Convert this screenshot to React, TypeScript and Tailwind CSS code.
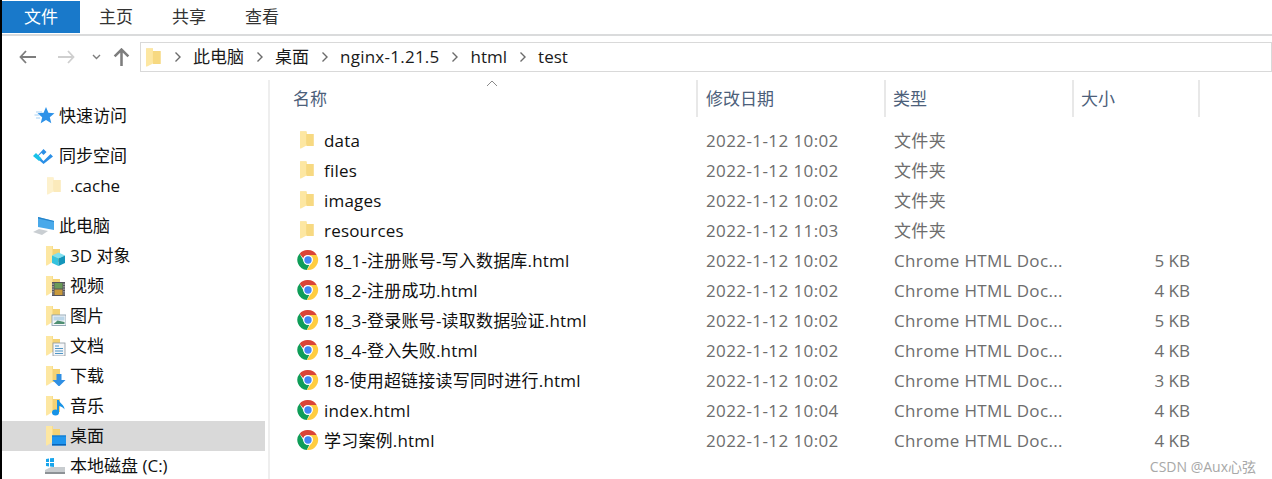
import React from "react";

const font = "font-['Open_Sans','Noto_Sans_CJK_SC',sans-serif]";

const Folder = ({ pale, big }: { pale?: boolean; big?: boolean }) => (
  <svg width={big ? 15 : 14} height={big ? 21 : 18} viewBox="0 0 14 18" className="shrink-0">
    <path d="M0 .5h6.500V3H13.500v12H7z" fill={pale ? "#f9e6b2" : "#f3d274"} />
    <path d="M0 .5h6.500V14.500L1 17.500H0z" fill={pale ? "#fdf1cd" : "#fde7a2"} />
    <path d="M6.500 3H13.500v12H6.500z" fill={pale ? "#fbeabb" : "#f7d981"} />
  </svg>
);

const Chrome = () => (
  <svg width="22" height="22" viewBox="0 0 48 48" className="mb-[2px] shrink-0">
    <path d="M24 2a22 22 0 0 1 19.050 11H24a11 11 0 0 0-10.300 7.200L5.600 10.100A22 22 0 0 1 24 2z" fill="#db4437" />
    <path d="M5.600 10.100 14.800 26A11 11 0 0 0 27 34.600L21.400 45.800A22 22 0 0 1 5.600 10.100z" fill="#0f9d58" />
    <path d="M43.050 13A22 22 0 0 1 21.400 45.800L32 29.500A11 11 0 0 0 33 17.500L24 13z" fill="#ffcd40" />
    <circle cx="24" cy="24" r="10.500" fill="#fff" />
    <circle cx="24" cy="24" r="8" fill="#4285f4" />
  </svg>
);

const LibFolder = ({ children }: { children?: React.ReactNode }) => (
  <svg width="20" height="20" viewBox="0 0 20 20" className="shrink-0">
    <path d="M0 0h7v3h7v13H2z" fill="#f3d274" />
    <path d="M0 0h6.500v16L1 19.500H0z" fill="#fde7a2" />
    {children}
  </svg>
);

const navIcons: Record<string, React.ReactNode> = {
  "3D 对象": (
    <g>
      <path d="M6 9.500l6.500-3 6.500 3-6.500 3z" fill="#7fe0f0" />
      <path d="M6 9.500l6.500 3V20L6 17z" fill="#35c3de" />
      <path d="M19 9.500l-6.500 3V20l6.500-3z" fill="#1496bb" />
    </g>
  ),
  视频: (
    <g>
      <rect x="6" y="6" width="13" height="14" fill="#55555d" />
      <rect x="8.500" y="7" width="8" height="5.500" fill="#6a9a58" />
      <rect x="8.500" y="13.500" width="8" height="5.500" fill="#c99a3c" />
      <path d="M7 7.500v11M18 7.500v11" stroke="#c9c9c9" strokeWidth="1" strokeDasharray="1.500 1" />
    </g>
  ),
  图片: (
    <g>
      <rect x="6" y="9" width="14" height="10.500" fill="#f4f6f8" stroke="#7f98a8" strokeWidth=".8" />
      <rect x="7.500" y="10.500" width="11" height="4" fill="#bcd6e8" />
      <path d="M7.500 18l4-3.500 7 1.500v2z" fill="#4f8f72" />
    </g>
  ),
  文档: (
    <g>
      <rect x="7" y="7" width="12" height="13" fill="#f4f6f8" stroke="#8c979f" strokeWidth=".8" />
      <path d="M9 10h4M9 12.500h8M9 15h8M9 17.500h8" stroke="#4f95c5" strokeWidth="1.100" />
    </g>
  ),
  下载: <path d="M10.500 8h5v6h4l-6.500 6.500L6.500 14h4z" fill="#2f8fe3" />,
  音乐: (
    <g fill="#1793e6">
      <ellipse cx="9.500" cy="16.500" rx="3.500" ry="3" />
      <path d="M11 4h2c.5 3.500 5.500 4.500 5.500 9.500-1-2-3-3-5.500-3.500v7h-2z" />
    </g>
  ),
  桌面: (
    <g>
      <rect x="6" y="9.500" width="14" height="10" fill="#1e95ee" />
      <rect x="6" y="18" width="14" height="1.500" fill="#0b63b5" />
      <path d="M6 9.500h14v1H6z" fill="#0f74c8" />
    </g>
  ),
};

const files = [
  { name: "data", date: "2022-1-12 10:02", type: "文件夹", size: "" },
  { name: "files", date: "2022-1-12 10:02", type: "文件夹", size: "" },
  { name: "images", date: "2022-1-12 10:02", type: "文件夹", size: "" },
  { name: "resources", date: "2022-1-12 11:03", type: "文件夹", size: "" },
  { name: "18_1-注册账号-写入数据库.html", date: "2022-1-12 10:02", type: "Chrome HTML Doc...", size: "5 KB" },
  { name: "18_2-注册成功.html", date: "2022-1-12 10:02", type: "Chrome HTML Doc...", size: "4 KB" },
  { name: "18_3-登录账号-读取数据验证.html", date: "2022-1-12 10:02", type: "Chrome HTML Doc...", size: "5 KB" },
  { name: "18_4-登入失败.html", date: "2022-1-12 10:02", type: "Chrome HTML Doc...", size: "4 KB" },
  { name: "18-使用超链接读写同时进行.html", date: "2022-1-12 10:02", type: "Chrome HTML Doc...", size: "3 KB" },
  { name: "index.html", date: "2022-1-12 10:04", type: "Chrome HTML Doc...", size: "4 KB" },
  { name: "学习案例.html", date: "2022-1-12 10:02", type: "Chrome HTML Doc...", size: "4 KB" },
];

const Crumb = ({ label, className }: { label: string; className?: string }) => (
  <>
    <svg width="8" height="12" viewBox="0 0 8 12" className="mx-[11.5px] shrink-0">
      <path d="M1.500 1.500 6 6l-4.500 4.500" fill="none" stroke="#6b6b6b" strokeWidth="1.400" />
    </svg>
    <span className={`text-[#1a1a1a] ${className ?? ""}`}>{label}</span>
  </>
);

const NavChild = ({ label, selected }: { label: string; selected?: boolean }) => (
  <div className={`flex h-[30px] items-center pl-[44px] ${selected ? "bg-[#d9d9d9]" : ""}`}>
    <LibFolder>{navIcons[label]}</LibFolder>
    <span className="ml-[4px] text-[#101010]">{label}</span>
  </div>
);

const NavHead = ({ icon, label, className }: { icon: React.ReactNode; label: string; className?: string }) => (
  <div className={`flex h-[30px] items-center pl-[31px] ${className ?? ""}`}>
    <span className="flex w-[26px] shrink-0 items-center">{icon}</span>
    <span className="text-[#101010]">{label}</span>
  </div>
);

const HeaderCell = ({ label, className }: { label: string; className: string }) => (
  <div className={`flex h-[37px] shrink-0 items-center border-r-2 border-[#e8e8e8] text-[#4c607a] ${className}`}>{label}</div>
);

export default function App() {
  return (
    <div className={`relative h-[479px] w-[1272px] overflow-hidden border-l-2 border-black bg-white text-[17px] ${font}`}>
      {/* ribbon tabs */}
      <div className="flex h-[36px] items-start border-b-2 border-[#dadbdc] pt-px">
        <div className="flex h-[32px] w-[78px] items-center justify-center bg-[#1979ca] text-white">文件</div>
        <div className="flex h-[32px] items-center gap-[39px] pl-[19px] text-[#333]">
          <span>主页</span>
          <span>共享</span>
          <span>查看</span>
        </div>
      </div>

      {/* address bar */}
      <div className="flex h-[44px] items-start pt-[6px]">
        <div className="flex h-[30px] w-[138px] shrink-0 items-center pl-[17px]">
          <svg width="17" height="14" viewBox="0 0 17 14">
            <path d="M7 1 1.500 7 7 13M2 7h15" fill="none" stroke="#7d7d7d" strokeWidth="1.800" />
          </svg>
          <svg width="17" height="14" viewBox="0 0 17 14" className="ml-[22px]">
            <path d="M10 1l5.500 6L10 13M15 7H0" fill="none" stroke="#cfcfcf" strokeWidth="1.800" />
          </svg>
          <svg width="9" height="6" viewBox="0 0 9 6" className="ml-[17px]">
            <path d="M1 1l3.500 3.500L8 1" fill="none" stroke="#7d7d7d" strokeWidth="1.400" />
          </svg>
          <svg width="17" height="18" viewBox="0 0 16 17" className="ml-[12px]">
            <path d="M8 2v15M1.500 8 8 1.500 14.500 8" fill="none" stroke="#7d7d7d" strokeWidth="2.400" />
          </svg>
        </div>
        <div className="flex h-[30px] w-[1132px] shrink-0 items-center border border-[#d9d9d9] pl-[5px]">
          <Folder big />
          <span className="w-[1px]" />
          <Crumb label="此电脑" />
          <Crumb label="桌面" />
          <Crumb label="nginx-1.21.5" className="tracking-[0.25px]" />
          <Crumb label="html" />
          <Crumb label="test" />
        </div>
      </div>

      <div className="flex">
        {/* nav pane */}
        <aside className="mr-[3px] w-[263px] shrink-0 pt-[21px]">
          <NavHead
            label="快速访问"
            icon={
              <svg width="22" height="18" viewBox="0 0 22 18">
                <path d="M13 0l2.400 5.800 6.100.5-4.700 4 1.500 6L13 13l-5.300 3.300 1.500-6-4.700-4 6.100-.5z" fill="#2e92e8" />
                <path d="M3 5h6M1.500 8h5M3 11h4" stroke="#a5d0f3" strokeWidth="1" />
              </svg>
            }
          />
          <NavHead
            label="同步空间"
            className="mt-[10px]"
            icon={
              <svg width="21" height="16" viewBox="0 0 21 16">
                <path d="M10.500 1l3 3-3 3-2-2-3 3 5 5 7-7 2.500 2.500-9.500 7.500L3 9.500z" fill="#2b8fe6" />
                <path d="M0 8l3-3 5.500 5.500-2.500 2.500z" fill="#18c2e8" />
              </svg>
            }
          />
          <div className="flex h-[30px] items-center pl-[45px]">
            <Folder pale />
            <span className="ml-[9px] text-[#101010]">.cache</span>
          </div>
          <NavHead
            label="此电脑"
            className="mt-[10px]"
            icon={
              <svg width="21" height="20" viewBox="0 0 21 20">
                <path d="M5 1l16 4v9L5 11z" fill="#49a9ea" />
                <path d="M5 1l16 4v1L5 2.500z" fill="#2583c9" />
                <path d="M0 16l6-3 9 2-6 4z" fill="#c9ced2" />
              </svg>
            }
          />
          <NavChild label="3D 对象" />
          <NavChild label="视频" />
          <NavChild label="图片" />
          <NavChild label="文档" />
          <NavChild label="下载" />
          <NavChild label="音乐" />
          <NavChild label="桌面" selected />
          <div className="flex h-[30px] items-center pl-[42px]">
            <svg width="22" height="20" viewBox="0 0 22 20" className="shrink-0">
              <path d="M1 14l6-3h14v5H1z" fill="#c8cccf" />
              <path d="M1 16h20v2H1z" fill="#8d9296" />
              <path d="M2 3l3-.500V6H2zM6 2.300 10 2v4H6zM2 7h3v3.500L2 10zM6 7h4v4l-4-.500z" fill="#18a5ec" />
            </svg>
            <span className="ml-[4px] text-[#101010]">本地磁盘 (C:)</span>
          </div>
        </aside>

        {/* file list */}
        <main className="min-w-0 flex-1 border-l-2 border-[#eeeeee]">
          <div className="flex">
            <HeaderCell label="名称" className="w-[428px] pl-[23px]" />
            <HeaderCell label="修改日期" className="w-[188px] pl-[8px]" />
            <HeaderCell label="类型" className="w-[188px] pl-[7px]" />
            <HeaderCell label="大小" className="w-[126px] pl-[7px]" />
          </div>
          <div className="pt-[9px]">
            {files.map((f) => (
              <div key={f.name} className="flex h-[30px] items-center">
                <div className="flex w-[428px] shrink-0 items-center pl-[27px] tracking-[0.2px] text-[#101010]">
                  <span className="flex w-[27px] shrink-0 items-center">
                    {f.size ? <Chrome /> : <span className="mb-[2px] pl-[3px]"><Folder /></span>}
                  </span>
                  {f.name}
                </div>
                <div className="w-[188px] shrink-0 pl-[8px] tracking-[0.4px] text-[#6d6d6d]">{f.date}</div>
                <div className="w-[188px] shrink-0 pl-[8px] tracking-[0.35px] text-[#6d6d6d]">{f.type}</div>
                <div className="w-[116px] shrink-0 text-right text-[#6d6d6d]">{f.size}</div>
              </div>
            ))}
          </div>
        </main>
      </div>

      {/* sort arrow, on top of the header */}
      <svg width="12" height="7" viewBox="0 0 12 7" className="absolute left-[484px] top-[80px]">
        <path d="M1 6l5-5 5 5" fill="none" stroke="#8a8a8a" strokeWidth="1" />
      </svg>
      {/* watermark */}
      <div className="absolute bottom-[2px] right-[16px] text-[14px] text-[#a8a8a8]">CSDN @Aux心弦</div>
    </div>
  );
}
